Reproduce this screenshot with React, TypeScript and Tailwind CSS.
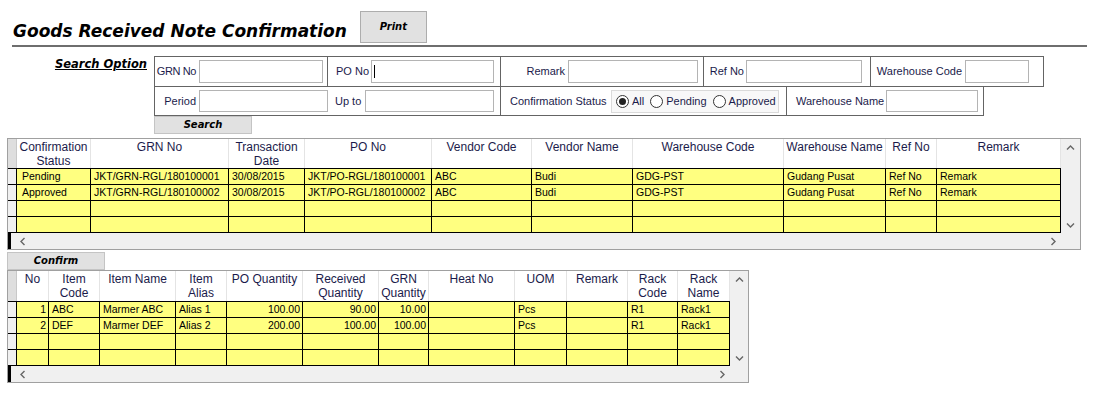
import React from "react";

const sans = "font-['Liberation_Sans',Arial,sans-serif]";
const dv = "font-['DejaVu_Sans',Verdana,sans-serif] font-bold italic";
const lbl = "text-[#1b1b4b]";

function Chev({ dir }: { dir: "up" | "down" | "left" | "right" }) {
  const paths: Record<string, string> = {
    up: "M1 5.5 L4.5 2 L8 5.5",
    down: "M1 2.5 L4.5 6 L8 2.5",
    left: "M5.5 1 L2 4.5 L5.5 8",
    right: "M2.5 1 L6 4.5 L2.5 8",
  };
  const horiz = dir === "left" || dir === "right";
  return (
    <svg width={horiz ? 8 : 9} height={horiz ? 9 : 8} viewBox={horiz ? "0 0 8 9" : "0 0 9 8"}>
      <path d={paths[dir]} fill="none" stroke="#666666" strokeWidth="1.4" />
    </svg>
  );
}

function Input({ w, h, cursor }: { w: string; h: string; cursor?: boolean }) {
  return (
    <div className={`${w} ${h} border border-[#b4b4b4] bg-white flex items-center shrink-0`}>
      {cursor && <div className="ml-[2px] w-px h-[13px] bg-black" />}
    </div>
  );
}

function Label({ w, children, tight }: { w: string; children: React.ReactNode; tight?: boolean }) {
  return (
    <div className={`${w} shrink-0 flex justify-end`}>
      <span className={`${lbl} whitespace-nowrap ${tight ? "tracking-[-0.4px]" : ""}`}>{children}</span>
    </div>
  );
}

function Radio({ checked, label }: { checked?: boolean; label: string }) {
  return (
    <div className="flex items-center gap-[3px]">
      <div className="w-[13px] h-[13px] rounded-full border border-[#333333] bg-white flex items-center justify-center">
        {checked && <div className="w-[7px] h-[7px] rounded-full bg-[#222222]" />}
      </div>
      <span className={`${lbl} whitespace-nowrap`}>{label}</span>
    </div>
  );
}

type Col = { w: string; head: React.ReactNode; cell: string };

function Grid({
  width,
  dataW,
  vsW,
  headH,
  cols,
  rows,
}: {
  width: string;
  dataW: string;
  vsW: string;
  headH: string;
  cols: Col[];
  rows: string[][];
}) {
  return (
    <div className={`${width} border border-[#a0a0a0] bg-white flex flex-col`}>
      <div className="flex">
        <div className={`${dataW} flex flex-col`}>
          <div className={`flex ${headH} border-b border-black`}>
            <div className="w-[9px] h-full bg-[#dedede] border-r border-[#c8c8c8] shrink-0" />
            {cols.map((c, i) => (
              <div
                key={i}
                className={`${c.w} h-full shrink-0 border-r border-[#e4e4e4] text-center pt-[1px] leading-[14px] text-[12px] ${lbl} whitespace-nowrap overflow-hidden`}
              >
                {c.head}
              </div>
            ))}
          </div>
          {rows.map((r, ri) => (
            <div key={ri} className="flex h-[16px] border-b border-black">
              <div className="w-[9px] h-full bg-[#f0f0f0] border-r border-black shrink-0" />
              {cols.map((c, i) => (
                <div
                  key={i}
                  className={`${c.w} ${c.cell} h-full shrink-0 border-r border-black bg-[#ffff80] text-[10.5px] leading-[15px] text-black whitespace-nowrap overflow-hidden`}
                >
                  {r[i] ?? ""}
                </div>
              ))}
            </div>
          ))}
        </div>
        <div className={`${vsW} bg-[#f0f0f0] flex flex-col items-center justify-between pt-[5px] pb-[4px]`}>
          <Chev dir="up" />
          <Chev dir="down" />
        </div>
      </div>
      <div className="flex h-[16px]">
        <div className={`${dataW} flex items-center bg-[#f0f0f0]`}>
          <div className="w-[3px] h-full bg-black" />
          <div className="ml-[8px] flex">
            <Chev dir="left" />
          </div>
          <div className="flex-1" />
          <div className="mr-[4px] flex">
            <Chev dir="right" />
          </div>
        </div>
        <div className={`${vsW} bg-[#f0f0f0]`} />
      </div>
    </div>
  );
}

const L = "pl-[3px] text-left";
const R = "pr-[2px] text-right";

const topCols: Col[] = [
  { w: "w-[74px]", head: <>Confirmation<br />Status</>, cell: "pl-[5px] text-left" },
  { w: "w-[138px]", head: "GRN No", cell: L },
  { w: "w-[76px]", head: <>Transaction<br />Date</>, cell: L },
  { w: "w-[127px]", head: "PO No", cell: L },
  { w: "w-[100px]", head: "Vendor Code", cell: L },
  { w: "w-[101px]", head: "Vendor Name", cell: L },
  { w: "w-[151px]", head: "Warehouse Code", cell: L },
  { w: "w-[102px]", head: "Warehouse Name", cell: L },
  { w: "w-[51px]", head: "Ref No", cell: L },
  { w: "w-[124px]", head: "Remark", cell: L },
];

const topRows: string[][] = [
  ["Pending", "JKT/GRN-RGL/180100001", "30/08/2015", "JKT/PO-RGL/180100001", "ABC", "Budi", "GDG-PST", "Gudang Pusat", "Ref No", "Remark"],
  ["Approved", "JKT/GRN-RGL/180100002", "30/08/2015", "JKT/PO-RGL/180100002", "ABC", "Budi", "GDG-PST", "Gudang Pusat", "Ref No", "Remark"],
  [],
  [],
];

const botCols: Col[] = [
  { w: "w-[32px]", head: "No", cell: R },
  { w: "w-[51px]", head: <>Item<br />Code</>, cell: L },
  { w: "w-[76px]", head: "Item Name", cell: L },
  { w: "w-[51px]", head: <>Item<br />Alias</>, cell: L },
  { w: "w-[76px]", head: "PO Quantity", cell: R },
  { w: "w-[76px]", head: <>Received<br />Quantity</>, cell: R },
  { w: "w-[50px]", head: <>GRN<br />Quantity</>, cell: R },
  { w: "w-[86px]", head: "Heat No", cell: L },
  { w: "w-[52px]", head: "UOM", cell: L },
  { w: "w-[61px]", head: "Remark", cell: L },
  { w: "w-[50px]", head: <>Rack<br />Code</>, cell: L },
  { w: "w-[52px]", head: <>Rack<br />Name</>, cell: L },
];

const botRows: string[][] = [
  ["1", "ABC", "Marmer ABC", "Alias 1", "100.00", "90.00", "10.00", "", "Pcs", "", "R1", "Rack1"],
  ["2", "DEF", "Marmer DEF", "Alias 2", "200.00", "100.00", "100.00", "", "Pcs", "", "R1", "Rack1"],
  [],
  [],
];

export default function App() {
  return (
    <div className={`w-[1100px] h-[400px] bg-white overflow-hidden ${sans} text-[11px]`}>
      {/* Title row */}
      <div className="flex items-start pt-[11px] h-[43px]">
        <div className={`${dv} text-[17px] leading-[20px] ml-[13px] mt-[10px] text-black whitespace-nowrap`}>
          Goods Received Note Confirmation
        </div>
        <div className="ml-[13px] w-[67px] h-[32px] bg-[#e1e1e1] border border-[#adadad] flex items-center justify-center">
          <span className={`${dv} text-[10px] leading-[12px] text-black`}>Print</span>
        </div>
      </div>
      <div className="ml-[12px] mt-[2px] w-[1075px] h-[2px] bg-[#6e6e6e]" />

      {/* Search area */}
      <div className="flex mt-[9px]">
        <div className="w-[154px] pr-[7px] text-right">
          <span className={`${dv} text-[11.5px] leading-[14px] underline text-black`}>Search Option</span>
        </div>
        <div className="flex flex-col">
          <div className="flex w-[890px] h-[31px] border border-[#646464]">
            <div className="w-[173px] h-full border-r border-[#646464] flex items-center">
              <Label w="w-[41px]" tight>GRN No</Label>
              <div className="ml-[3px]"><Input w="w-[124px]" h="h-[23px]" /></div>
            </div>
            <div className="w-[173px] h-full border-r border-[#646464] flex items-center">
              <Label w="w-[41px]">PO No</Label>
              <div className="ml-[2px]"><Input w="w-[123px]" h="h-[23px]" cursor /></div>
            </div>
            <div className="w-[203px] h-full border-r border-[#646464] flex items-center">
              <Label w="w-[64px]">Remark</Label>
              <div className="ml-[3px]"><Input w="w-[130px]" h="h-[23px]" /></div>
            </div>
            <div className="w-[167px] h-full border-r border-[#646464] flex items-center">
              <Label w="w-[40px]">Ref No</Label>
              <div className="ml-[2px]"><Input w="w-[116px]" h="h-[23px]" /></div>
            </div>
            <div className="flex-1 h-full flex items-center">
              <Label w="w-[91px]">Warehouse Code</Label>
              <div className="ml-[3px]"><Input w="w-[64px]" h="h-[23px]" /></div>
            </div>
          </div>
          <div className="flex w-[830px] h-[29px] border-x border-b border-[#646464]">
            <div className="w-[346px] h-full border-r border-[#646464] flex items-center">
              <Label w="w-[41px]">Period</Label>
              <div className="ml-[3px]"><Input w="w-[129px]" h="h-[22px]" /></div>
              <span className={`ml-[7px] w-[30px] ${lbl} whitespace-nowrap`}>Up to</span>
              <Input w="w-[129px]" h="h-[22px]" />
            </div>
            <div className="w-[286px] h-full border-r border-[#646464] flex items-center pl-[9px]">
              <span className={`w-[101px] shrink-0 ${lbl} whitespace-nowrap`}>Confirmation Status</span>
              <div className="w-[168px] h-[23px] border border-[#dadada] bg-[#f8f8f8] flex items-center pl-[4px] gap-[6px] overflow-hidden">
                <Radio checked label="All" />
                <Radio label="Pending" />
                <Radio label="Approved" />
              </div>
            </div>
            <div className="flex-1 h-full flex items-center pl-[9px]">
              <span className={`w-[90px] shrink-0 ${lbl} whitespace-nowrap`}>Warehouse Name</span>
              <Input w="w-[92px]" h="h-[22px]" />
            </div>
          </div>
          <div className="w-[98px] h-[18px] bg-[#e1e1e1] border border-[#c4c4c4] flex items-center justify-center">
            <span className={`${dv} text-[10px] leading-[12px] text-black`}>Search</span>
          </div>
        </div>
      </div>

      {/* Top grid */}
      <div className="ml-[7px] mt-[4px]">
        <Grid
          width="w-[1074px]"
          dataW="w-[1053px]"
          vsW="w-[19px]"
          headH="h-[30px]"
          cols={topCols}
          rows={topRows}
        />
      </div>

      {/* Confirm button */}
      <div className="ml-[7px] mt-[2px] w-[98px] h-[18px] bg-[#e1e1e1] border border-[#c4c4c4] flex items-center justify-center">
        <span className={`${dv} text-[10px] leading-[12px] text-black`}>Confirm</span>
      </div>

      {/* Bottom grid */}
      <div className="ml-[7px]">
        <Grid
          width="w-[742px]"
          dataW="w-[722px]"
          vsW="w-[18px]"
          headH="h-[31px]"
          cols={botCols}
          rows={botRows}
        />
      </div>
    </div>
  );
}
